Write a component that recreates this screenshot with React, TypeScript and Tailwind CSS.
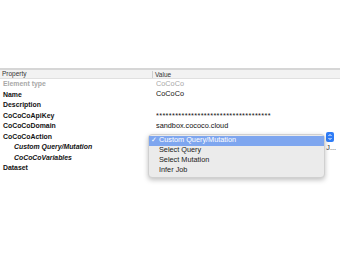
import React from 'react';

const font = { fontFamily: '"Liberation Sans", Arial, sans-serif' };

interface Row {
  label: string;
  value?: string;
  muted?: boolean;
  indent?: boolean;
  tail?: string;
}

const rows: Row[] = [
  { label: 'Element type', value: 'CoCoCo', muted: true },
  { label: 'Name', value: 'CoCoCo' },
  { label: 'Description' },
  { label: 'CoCoCoApiKey', value: '*'.repeat(36) },
  { label: 'CoCoCoDomain', value: 'sandbox.cococo.cloud' },
  { label: 'CoCoCoAction' },
  { label: 'Custom Query/Mutation', indent: true, tail: 'J...' },
  { label: 'CoCoCoVariables', indent: true },
  { label: 'Dataset' },
];

const options = ['Custom Query/Mutation', 'Select Query', 'Select Mutation', 'Infer Job'];

export default function App() {
  return (
    <div className="w-[340px] h-[260px] bg-white relative overflow-hidden text-black" style={font}>
      <div className="h-[68px]" />
      <div className="h-[2px] bg-[#d6d6d6]" />
      {/* header */}
      <div className="flex h-[9px] items-center bg-[#f2f2f2] border-b border-[#e0e0e0] text-[6.5px] text-[#333]">
        <div className="w-[152px] pl-[2px]">Property</div>
        <div className="flex-1 border-l border-[#cfcfcf] pl-[2px] leading-[7px]">Value</div>
      </div>

      {rows.map((r) => (
        <div key={r.label} className="flex h-[10.55px] items-center">
          <div
            className={`w-[156px] text-[6.9px] font-bold whitespace-nowrap ${r.indent ? 'pl-[14px] italic' : 'pl-[3px]'} ${r.muted ? 'text-[#a8a8a8]' : 'text-[#111]'}`}
          >
            {r.label}
          </div>
          <div
            className={`flex-1 text-[7.3px] whitespace-nowrap overflow-hidden ${r.muted ? 'text-[#a8a8a8]' : 'text-[#111]'} ${r.value?.startsWith('*') ? 'tracking-[0.35px] pt-[2px]' : ''}`}
          >
            {r.value}
          </div>
          {r.tail && <div className="pr-[4px] pt-[2px] text-[7.3px] text-[#333]">{r.tail}</div>}
        </div>
      ))}

      {/* stepper next to the popup */}
      <div className="absolute left-[326px] top-[132px] w-[8px] h-[10px] rounded-[2px] bg-[#2f7cf6] flex flex-col items-center justify-center">
        <svg width="6" height="8" viewBox="0 0 6 8" fill="none" stroke="white" strokeWidth="1">
          <path d="M1.5 3 L3 1.5 L4.5 3" />
          <path d="M1.5 5 L3 6.5 L4.5 5" />
        </svg>
      </div>

      {/* popup menu */}
      <div className="absolute left-[148px] top-[134px] w-[177px] rounded-[4px] bg-[#ebebeb] border border-[#d0d0d0] shadow-[0_2px_5px_rgba(0,0,0,0.25)] pt-[1px] pb-[2px] text-[7.3px] text-[#222]">
        {options.map((o, i) => (
          <div
            key={o}
            className={`flex h-[9.8px] items-center ${i === 0 ? 'bg-[#7ea6ef] text-white' : ''}`}
          >
            <span className="w-[10px] pl-[2px]">{i === 0 ? '✓' : ''}</span>
            <span>{o}</span>
          </div>
        ))}
      </div>
    </div>
  );
}
